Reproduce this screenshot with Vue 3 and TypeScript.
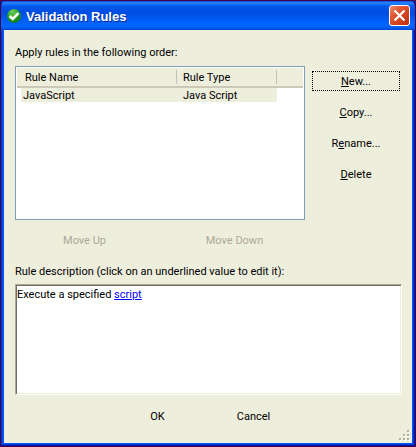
<script setup lang="ts">
import { ref } from 'vue'

interface Rule {
  name: string
  type: string
}

interface Action {
  before: string
  key: string
  after: string
}

const rules = ref<Rule[]>([{ name: 'JavaScript', type: 'Java Script' }])
const selected = ref(0)

const actions: Action[] = [
  { before: '', key: 'N', after: 'ew...' },
  { before: '', key: 'C', after: 'opy...' },
  { before: 'R', key: 'e', after: 'name...' },
  { before: '', key: 'D', after: 'elete' },
]
</script>

<template>
  <main class="window">
    <header class="titlebar">
      <svg class="app-icon" viewBox="0 0 16 16" aria-hidden="true">
        <defs>
          <radialGradient id="ball" cx="0.4" cy="0.2" r="0.9">
            <stop offset="0" stop-color="#6fd05c" />
            <stop offset="0.5" stop-color="#22a023" />
            <stop offset="1" stop-color="#087014" />
          </radialGradient>
        </defs>
        <circle cx="8" cy="8" r="7" fill="url(#ball)" />
        <path d="M3.6 8 6.8 11 12.4 5.2" fill="none" stroke="#fff" stroke-width="2.6" />
      </svg>
      <h1>Validation Rules</h1>
      <button type="button" class="close" aria-label="Close">
        <svg viewBox="0 0 21 21" aria-hidden="true">
          <defs>
            <linearGradient id="red" x1="0" y1="0" x2="1" y2="1">
              <stop offset="0" stop-color="#ee9474" />
              <stop offset="0.35" stop-color="#e0552f" />
              <stop offset="1" stop-color="#bd2c08" />
            </linearGradient>
          </defs>
          <rect x="0.5" y="0.5" width="20" height="20" rx="2.5" fill="url(#red)" stroke="#fff" />
          <path d="M5.5 5.5 15.5 15.5M15.5 5.5 5.5 15.5" stroke="#fff" stroke-width="2.2" />
        </svg>
      </button>
    </header>

    <div class="client">
      <h2 id="rules-label">Apply rules in the following order:</h2>
      <section class="rules">
        <div class="list">
          <table aria-labelledby="rules-label">
            <colgroup>
              <col class="col-name" />
              <col class="col-type" />
              <col />
            </colgroup>
            <thead>
              <tr>
                <th scope="col">Rule Name</th>
                <th scope="col">Rule Type</th>
                <td></td>
              </tr>
            </thead>
            <tbody>
              <tr
                v-for="(rule, i) in rules"
                :key="rule.name"
                :class="{ selected: i === selected }"
                @click="selected = i"
              >
                <td>{{ rule.name }}</td>
                <td>{{ rule.type }}</td>
                <td></td>
              </tr>
            </tbody>
          </table>
        </div>
        <div class="actions">
          <button
            v-for="(action, i) in actions"
            :key="action.key"
            type="button"
            :class="{ focused: i === 0 }"
          >{{ action.before }}<u>{{ action.key }}</u>{{ action.after }}</button>
        </div>
      </section>

      <div class="moves">
        <button type="button" disabled>Move Up</button>
        <button type="button" disabled>Move Down</button>
      </div>

      <h2>Rule description (click on an underlined value to edit it):</h2>
      <div class="description">Execute a specified <a href="#script">script</a></div>

      <footer class="footer">
        <button type="button">OK</button>
        <button type="button">Cancel</button>
      </footer>
      <svg class="grip" viewBox="0 0 12 12" aria-hidden="true">
        <path d="M9 1h2v2h-2zM5 5h2v2h-2zM9 5h2v2h-2zM1 9h2v2h-2zM5 9h2v2h-2zM9 9h2v2h-2z" fill="#fff" />
        <path d="M8 0h2v2h-2zM4 4h2v2h-2zM8 4h2v2h-2zM0 8h2v2h-2zM4 8h2v2h-2zM8 8h2v2h-2z" fill="#aeae9f" />
      </svg>
    </div>
  </main>
</template>

<style>
body {
  background: #40004c;
}
</style>

<style scoped>
.window {
  box-sizing: border-box;
  min-height: 100vh;
  display: flex;
  flex-direction: column;
  padding: 0 3px 3px;
  border: 1px solid #40004c;
  border-radius: 3px 3px 0 0;
  background: #0054ee;
  box-shadow: inset 1px 0 #0033d0, inset -1px -1px #0018a4, inset -2px -2px #0038d8;
  font: 11px/13px Tahoma, Roboto, sans-serif;
  color: #000;
}

h1,
h2 {
  margin: 0;
  font: inherit;
}

button {
  padding: 0;
  border: 0;
  background: none;
  font: inherit;
  color: inherit;
}

.titlebar {
  display: flex;
  align-items: center;
  height: 29px;
  margin: 0 -3px;
  padding: 0 5px;
  border-radius: 6px 6px 0 0;
  background: linear-gradient(#0a50d8 0, #2a86ff 2px, #0058ea 5px, #004ce0 12px, #0060fa 20px, #0068ff 25px, #0048d8 29px);
}

.app-icon {
  width: 16px;
  height: 16px;
}

h1 {
  flex: 1;
  margin-left: 4px;
  padding-top: 2px;
  font: bold 13px/18px "Trebuchet MS", "Liberation Sans", sans-serif;
  color: #fff;
  text-shadow: 1px 1px #0a2a90;
}

.close,
.close svg {
  display: block;
  width: 21px;
  height: 21px;
}

.client {
  position: relative;
  flex: 1;
  display: flex;
  flex-direction: column;
  padding: 16px 10px 0 11px;
  background: #eeeedd;
}

.rules {
  display: flex;
  gap: 7px;
  margin-top: 7px;
}

.list {
  box-sizing: border-box;
  flex: 1;
  min-height: 154px;
  padding: 1px;
  border: 1px solid #7f9db9;
  background: #fff;
}

table {
  width: 100%;
  table-layout: fixed;
  border-collapse: separate;
  border-spacing: 0;
}

.col-name {
  width: 160px;
}

.col-type {
  width: 100px;
}

th,
thead td {
  height: 18px;
  padding: 0 8px;
  border-bottom: 2px solid #cdc9b8;
  background: #eeeedd;
  font-weight: normal;
  text-align: left;
}

th {
  background: linear-gradient(#c4c2b4, #c4c2b4) 100% 50% / 1px 14px no-repeat #eeeedd;
}

th + th {
  padding-left: 6px;
}

tbody td {
  height: 14px;
  padding: 0 6px;
}

.selected td {
  background: #eeeedd;
}

.selected td:first-child {
  background: linear-gradient(90deg, #fff 4px, #eeeedd 4px);
}

.selected td:last-child {
  background: #fff;
}

.actions {
  display: flex;
  flex-direction: column;
  gap: 11px;
  width: 88px;
  margin-right: 2px;
  padding-top: 5px;
}

.actions button {
  height: 20px;
}

.focused {
  outline: 1px dotted #000;
  outline-offset: -1px;
}

.moves {
  display: flex;
  gap: 75px;
  margin: 10px 0 15px 32px;
}

.moves button {
  width: 75px;
  height: 20px;
  color: #aca899;
}

.description {
  min-height: 105px;
  margin-top: 6px;
  padding: 3px 0 1px 1px;
  border: 1px solid;
  border-color: #aca899 #fff #fff #aca899;
  background: #fff;
  box-shadow: inset 1px 1px #716f64, inset -1px -1px #eeeedd;
}

.description a {
  color: #00f;
}

.footer {
  display: flex;
  justify-content: center;
  gap: 21px;
  padding: 11px 6px 17px 0;
}

.footer button {
  width: 75px;
  height: 20px;
}

.grip {
  position: absolute;
  right: 1px;
  bottom: 1px;
  width: 12px;
  height: 12px;
}
</style>
